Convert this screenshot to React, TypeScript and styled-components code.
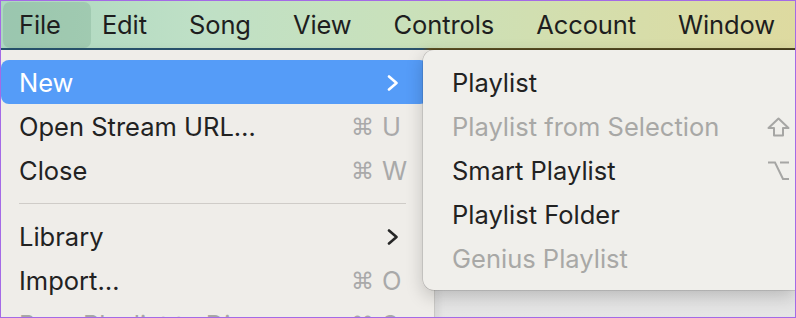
import React from "react";
import styled, { createGlobalStyle } from "styled-components";

const Global = createGlobalStyle`
  html, body { margin: 0; padding: 0; background: #ffffff; }
  * { box-sizing: border-box; }
`;

const Frame = styled.div`
  position: relative;
  width: 796px;
  height: 318px;
  border: 1px solid #a46ae6;
  overflow: hidden;
  display: flex;
  flex-direction: column;
  font-family: "Inter", "DejaVu Sans", sans-serif;
  -webkit-font-smoothing: antialiased;
`;

const MenuBar = styled.div`
  flex: none;
  height: 49px;
  display: flex;
  align-items: center;
  padding: 0 0 0 2px;
  background: linear-gradient(90deg, #acd7c0 0%, #bfe0c6 25%, #c9e1bb 50%, #d5deac 75%, #dedaa0 100%);
  border-bottom: 2px solid transparent;
  border-image: linear-gradient(90deg, #27536e 0%, #2d5670 53%, #5d5224 54%, #4e4520 100%) 1;
`;

const BarItem = styled.span<{ $active?: boolean }>`
  display: flex;
  align-items: center;
  height: 46px;
  padding: ${(p) => (p.$active ? "0 30px 0 16px" : "0 21px")};
  margin-right: ${(p) => (p.$active ? "-10px" : "0")};
  border-radius: 7px;
  background: ${(p) => (p.$active ? "rgba(90, 140, 115, 0.22)" : "transparent")};
  font-size: 25.5px;
  letter-spacing: -0.1px;
  color: #1e1e1e;
  white-space: nowrap;
`;

const Content = styled.div`
  flex: 1;
  display: flex;
  align-items: flex-start;
  background: linear-gradient(180deg, #ececec 0%, #e4e4e4 100%);
`;

const Menu = styled.div`
  flex: none;
  width: 434px;
  align-self: stretch;
  padding: 10px 6px 0 0;
  background: #efede9;
  border-right: 1px solid #c9c8c5;
  box-shadow: 3px 0 8px rgba(0, 0, 0, 0.08);
`;

const SubMenu = styled.div`
  position: relative;
  z-index: 1;
  flex: 1;
  margin-left: -12px;
  padding: 10px 0 10px 10px;
  background: #f0efeb;
  border-radius: 11px 0 0 11px;
  box-shadow: 0 6px 18px rgba(0, 0, 0, 0.2), 0 0 0 0.5px rgba(0, 0, 0, 0.2);
`;

const Item = styled.div<{ $active?: boolean; $disabled?: boolean; $sub?: boolean }>`
  display: flex;
  align-items: center;
  justify-content: space-between;
  height: 44px;
  padding: ${(p) => (p.$sub ? "1px 5px 0 19px" : "1px 22px 0 18px")};
  border-radius: 8px;
  font-size: 25.5px;
  white-space: nowrap;
  background: ${(p) => (p.$active ? "#559cf8" : "transparent")};
  color: ${(p) => (p.$active ? "#ffffff" : p.$disabled ? "#a8a8a6" : "#222222")};
`;

const Separator = styled.div`
  height: 22px;
  display: flex;
  align-items: center;
  padding: 0 22px 0 18px;
  &::after {
    content: "";
    flex: 1;
    height: 1px;
    background: #cfccc8;
  }
`;

const Shortcut = styled.span`
  display: flex;
  align-items: center;
  color: #a9a9a9;
`;

const Mod = styled.span`
  font-family: "DejaVu Sans", sans-serif;
  font-size: 23px;
  margin-right: 8px;
`;

const Key = styled.span`
  width: 24px;
  font-size: 25.5px;
`;

const Arrow = styled.svg`
  position: absolute;
  left: 612px;
  top: 148px;
  pointer-events: none;
`;

const Chevron = ({ color }: { color: string }) => (
  <svg width="16" height="16" viewBox="0 0 16 16" style={{ marginRight: 4 }}>
    <path d="M3 1.5 L10.5 8 L3 14.5" fill="none" stroke={color} strokeWidth="2.6" strokeLinecap="round" strokeLinejoin="round" />
  </svg>
);

const ShiftGlyph = () => (
  <svg width="23" height="20" viewBox="0 0 23 20">
    <path d="M11.5 1.5 L21.5 11 L16 11 L16 18.5 L7 18.5 L7 11 L1.5 11 Z" fill="none" stroke="#a6a6a4" strokeWidth="2" strokeLinejoin="round" />
  </svg>
);

const OptionGlyph = () => (
  <svg width="23" height="20" viewBox="0 0 23 20">
    <path d="M1 1.5 H8 L16 18 H22 M13 1.5 H22" fill="none" stroke="#a6a6a4" strokeWidth="2" />
  </svg>
);

const barItems = ["File", "Edit", "Song", "View", "Controls", "Account", "Window"];

export default function App() {
  return (
    <>
      <Global />
      <Frame>
        <MenuBar>
          {barItems.map((t, i) => (
            <BarItem key={t} $active={i === 0}>
              {t}
            </BarItem>
          ))}
        </MenuBar>
        <Content>
          <Menu>
            <Item $active>
              <span>New</span>
              <Chevron color="#ffffff" />
            </Item>
            <Item>
              <span>Open Stream URL…</span>
              <Shortcut>
                <Mod>⌘</Mod>
                <Key>U</Key>
              </Shortcut>
            </Item>
            <Item>
              <span>Close</span>
              <Shortcut>
                <Mod>⌘</Mod>
                <Key>W</Key>
              </Shortcut>
            </Item>
            <Separator />
            <Item>
              <span>Library</span>
              <Chevron color="#262626" />
            </Item>
            <Item>
              <span>Import…</span>
              <Shortcut>
                <Mod>⌘</Mod>
                <Key>O</Key>
              </Shortcut>
            </Item>
            <Item $disabled>
              <span>Burn Playlist to Disc</span>
              <Shortcut>
                <Mod>⌘</Mod>
                <Key>S</Key>
              </Shortcut>
            </Item>
          </Menu>
          <SubMenu>
            <Item $sub>
              <span>Playlist</span>
            </Item>
            <Item $sub $disabled>
              <span>Playlist from Selection</span>
              <ShiftGlyph />
            </Item>
            <Item $sub>
              <span>Smart Playlist</span>
              <OptionGlyph />
            </Item>
            <Item $sub>
              <span>Playlist Folder</span>
            </Item>
            <Item $sub $disabled>
              <span>Genius Playlist</span>
            </Item>
          </SubMenu>
        </Content>
        <Arrow width="104" height="34" viewBox="0 0 104 34">
          <g transform="translate(9.5 23.5) rotate(-8.8)">
            <path d="M0 0 L21 -8.5 L15.5 0 L21 8.5 Z" fill="#a052ee" />
            <path d="M14 0 L86 0" stroke="#a052ee" strokeWidth="2.2" strokeLinecap="round" />
          </g>
        </Arrow>
      </Frame>
    </>
  );
}
